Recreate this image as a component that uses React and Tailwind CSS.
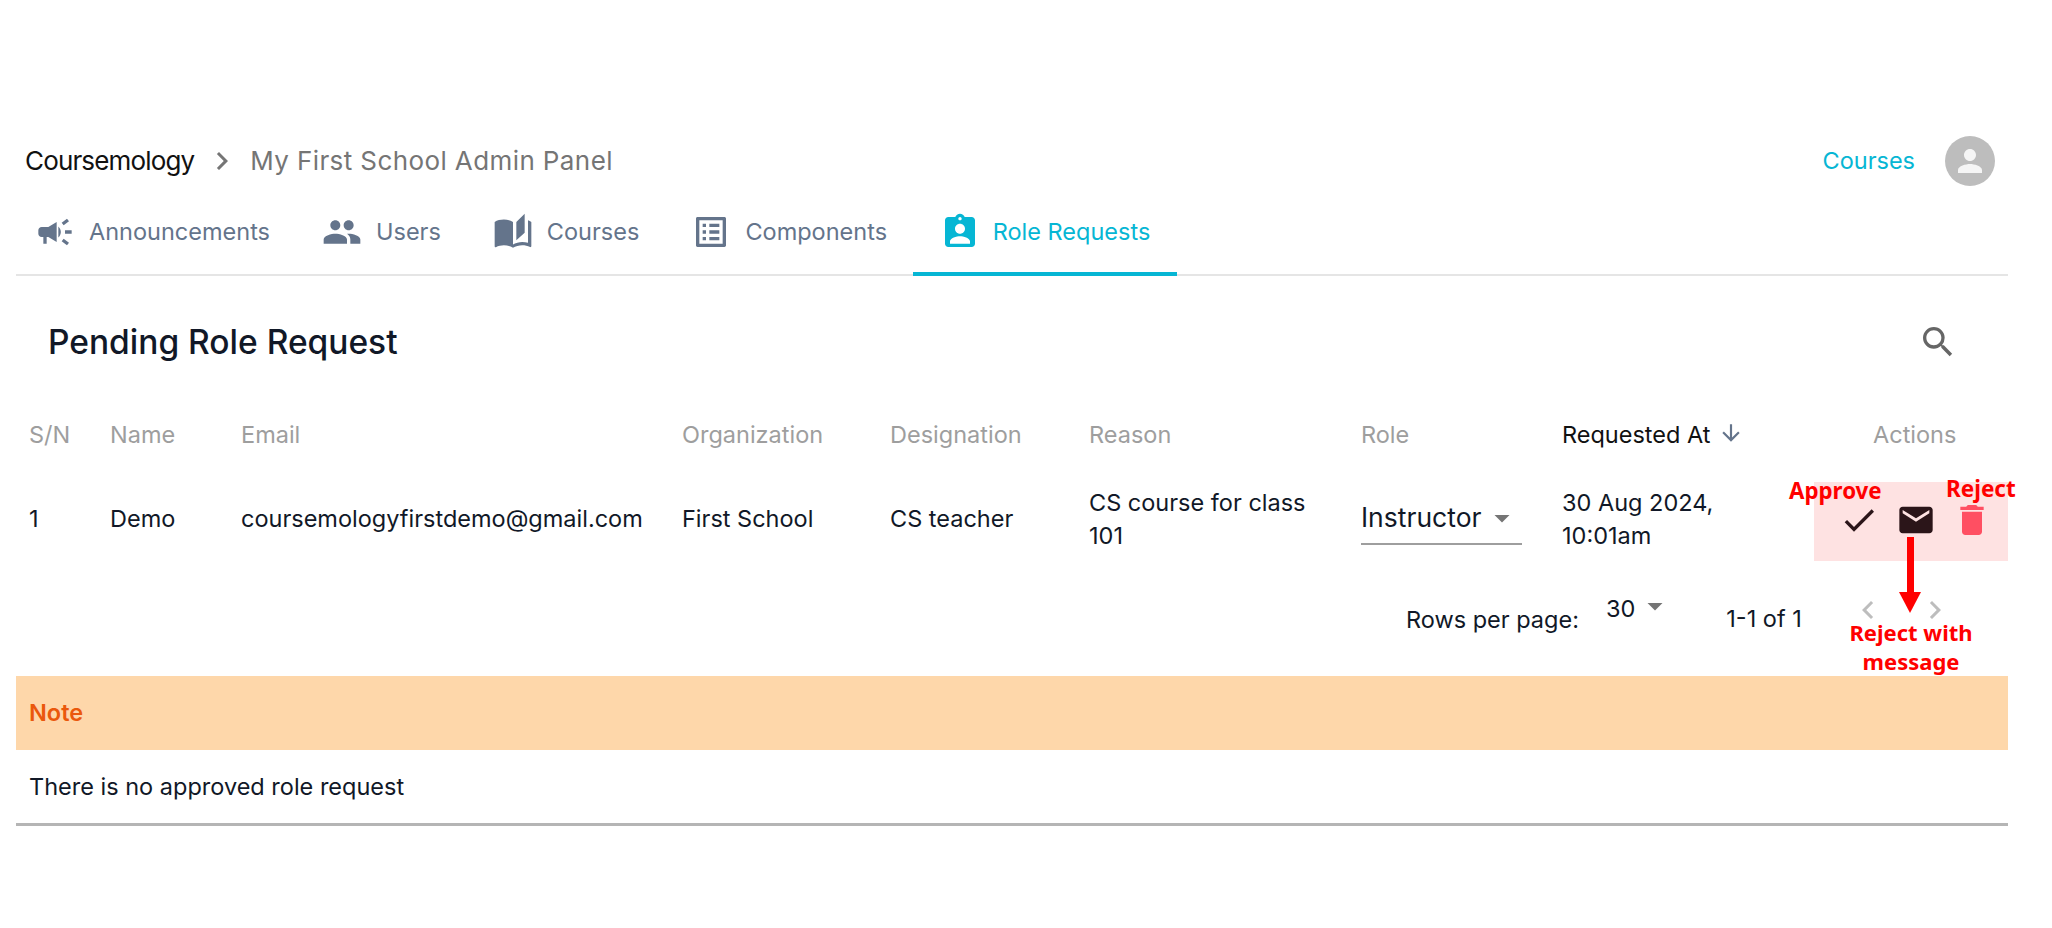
import {
  MdArrowDownward,
  MdArrowDropDown,
  MdAssignmentInd,
  MdAutoStories,
  MdCampaign,
  MdCheck,
  MdChevronLeft,
  MdChevronRight,
  MdDelete,
  MdEmail,
  MdGroup,
  MdListAlt,
  MdPerson,
  MdSearch,
} from "react-icons/md";

const TABS = [
  { label: "Announcements", icon: MdCampaign },
  { label: "Users", icon: MdGroup },
  { label: "Courses", icon: MdAutoStories },
  { label: "Components", icon: MdListAlt },
];

const COLUMNS = [
  { label: "S/N", width: "w-[81px]" },
  { label: "Name", width: "w-[131px]" },
  { label: "Email", width: "w-[441px]" },
  { label: "Organization", width: "w-[208px]" },
  { label: "Designation", width: "w-[199px]" },
  { label: "Reason", width: "w-[272px]" },
  { label: "Role", width: "w-[201px]" },
];

export default function App() {
  return (
    <div className="min-h-[928px] bg-white pt-[136px] font-['Inter','Liberation_Sans',sans-serif] text-[#111827]">
      <div className="mx-4 w-[1992px]">
        <header className="flex h-[49px] items-center justify-between pl-[9px] pr-[13px]">
          <div className="flex items-center text-[26px]">
            <span className="tracking-[-0.85px] text-[#111]">Coursemology</span>
            <MdChevronRight className="mx-[10px] text-[36px] text-[#757575]" />
            <span className="tracking-[0.4px] text-[#757575]">My First School Admin Panel</span>
          </div>
          <div className="flex items-center gap-[30px]">
            <span className="text-[23.5px] text-[#06b6d4]">Courses</span>
            <div className="flex h-[50px] w-[50px] items-center justify-center rounded-full bg-[#bdbdbd] text-[#f5f5f5]">
              <MdPerson className="text-[36px]" />
            </div>
          </div>
        </header>

        <nav className="flex h-[91px] border-b-2 border-[#e5e5e5]">
          <div className="-ml-[7px] flex">
            {TABS.map(({ label, icon: Icon }) => (
              <div key={label} className="flex items-center gap-[14px] px-[26px] pt-[4px] text-[23.5px] text-[#64748b]">
                <Icon className="text-[40px]" />
                {label}
              </div>
            ))}
          </div>
          <div className="-mb-[2px] flex w-[264px] items-center justify-center gap-[13px] border-b-4 border-[#06b6d4] pt-[6px] text-[23.5px] text-[#06b6d4]">
            <MdAssignmentInd className="text-[40px]" />
            Role Requests
          </div>
        </nav>

        <div className="flex h-[132px] items-center justify-between pl-[32px] pr-[50px]">
          <h1 className="text-[33.5px] font-medium">Pending Role Request</h1>
          <MdSearch className="text-[40px] text-[#666]" />
        </div>

        <table className="w-full table-fixed border-collapse text-[23.5px]">
          <thead>
            <tr className="h-[53px]">
              {COLUMNS.map(({ label, width }) => (
                <th key={label} className={`pl-[13px] text-left font-normal text-[#9e9e9e] ${width}`}>
                  {label}
                </th>
              ))}
              <th className="w-[252px] pl-[13px] text-left font-normal text-[#111]">
                <span className="inline-flex items-center gap-[8px]">
                  Requested At
                  <MdArrowDownward className="mb-[4px] text-[26px] text-[#64748b]" />
                </span>
              </th>
              <th className="pl-[72px] text-left font-normal text-[#9e9e9e]">Actions</th>
            </tr>
          </thead>
          <tbody>
            <tr className="h-[116px]">
              <td className="pl-[13px]">1</td>
              <td className="pl-[13px]">Demo</td>
              <td className="pl-[13px]">coursemologyfirstdemo@gmail.com</td>
              <td className="pl-[13px]">First School</td>
              <td className="pl-[13px]">CS teacher</td>
              <td className="pl-[13px] pr-[20px] leading-[33px]">CS course for class 101</td>
              <td className="pl-[13px]">
                <div className="flex h-[52px] w-[161px] items-center justify-between border-b-2 border-[#9e9e9e] text-[26.5px]">
                  Instructor
                  <MdArrowDropDown className="mr-[2px] text-[36px] text-[#757575]" />
                </div>
              </td>
              <td className="pl-[13px] leading-[33px]">30 Aug 2024, 10:01am</td>
              <td className="relative">
                <div className="absolute right-0 top-[21px] flex h-[79px] w-[194px] items-center gap-[16px] bg-[#fee2e2] pb-[3px] pl-[25px]">
                  <MdCheck className="mr-[1px] text-[40px] text-[#2b1519]" />
                  <MdEmail className="text-[40px] text-[#2b1519]" />
                  <MdDelete className="text-[40px] text-[#ff4f62]" />
                </div>
              </td>
            </tr>
          </tbody>
        </table>

        <div className="flex h-[99px] items-start pl-[1390px] pt-[14px] text-[23.5px]">
          <span className="mt-[11px]">Rows per page:</span>
          <span className="ml-[27px]">30</span>
          <MdArrowDropDown className="ml-[2px] mt-[-3px] text-[36px] text-[#757575]" />
          <span className="ml-[53px] mt-[10px]">1-1 of 1</span>
          <MdChevronLeft className="ml-[48px] mt-[1px] text-[36px] text-[#bdbdbd]" />
          <MdChevronRight className="ml-[31px] mt-[1px] text-[36px] text-[#bdbdbd]" />
        </div>

        <div className="flex h-[74px] items-center bg-[#fed7aa] px-[13px] text-[23.5px] font-semibold text-[#ea580c]">
          Note
        </div>
        <div className="flex h-[76px] items-center border-b-[3px] border-[#b5b5b5] px-[13px] text-[23.5px]">
          There is no approved role request
        </div>
      </div>

      {/* callouts over the action buttons */}
      <span className="absolute left-[1789px] top-[474px] font-['Noto_Sans',sans-serif] text-[22.3px] font-bold text-[#ff0000]">Approve</span>
      <span className="absolute left-[1946px] top-[472px] font-['Noto_Sans',sans-serif] text-[22.5px] font-bold text-[#ff0000]">Reject</span>
      <div className="absolute left-[1899px] top-[537px] flex flex-col items-center">
        <div className="h-[55px] w-[7px] bg-[#ff0000]" />
        <div className="h-0 w-0 border-x-[11px] border-t-[21px] border-x-transparent border-t-[#ff0000]" />
      </div>
      <div className="absolute left-[1829px] top-[618px] w-[164px] text-center font-['Noto_Sans',sans-serif] text-[22px] font-bold leading-[29px] text-[#ff0000]">
        Reject with message
      </div>
    </div>
  );
}
